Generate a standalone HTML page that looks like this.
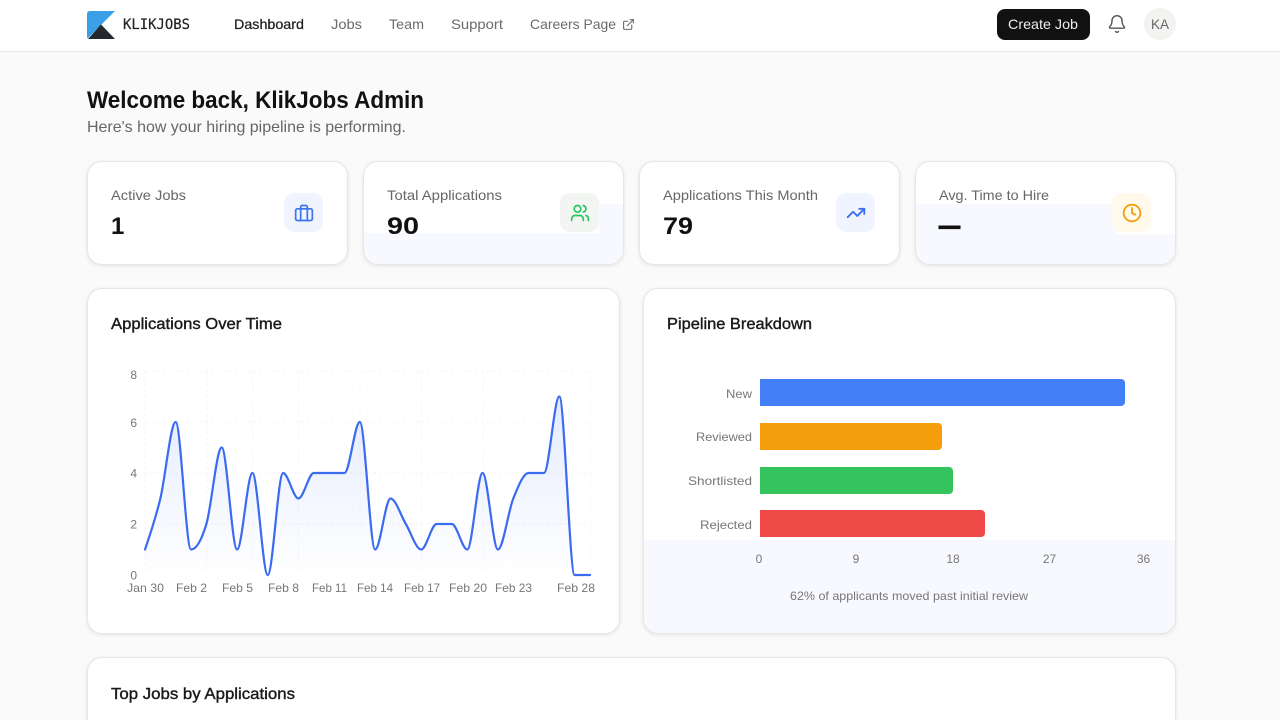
<!DOCTYPE html>
<html lang="en">
<head>
<meta charset="utf-8">
<title>KlikJobs Dashboard</title>
<style>
html,body{margin:0;padding:0;width:1280px;height:720px;overflow:hidden;background:#fafafa;font-family:"Liberation Sans",sans-serif}
#page{position:relative;width:1280px;height:720px;overflow:hidden;background:#fafafa}
.abs,.card,.ico{position:absolute;box-sizing:border-box}
.nav{position:absolute;left:0;top:0;width:1280px;height:52px;background:#fff;border-bottom:1px solid #e8e8e8;box-sizing:border-box}
.card{background:#fff;border:1px solid #e6e6e6;border-radius:15px;box-shadow:0 1px 4px rgba(0,0,0,.09);overflow:hidden}
.lav{position:absolute;background:#f8f9fe}
.ico{width:39px;height:39px;top:193px;border-radius:10px;display:flex;align-items:center;justify-content:center}
.bar{position:absolute;left:760px;height:27px;border-radius:0 4px 4px 0}
svg{display:block}
#t{position:absolute;left:0;top:0}
#t text{font-family:"Liberation Sans",sans-serif}
.m{stroke-width:.25;paint-order:stroke}
.lab{font-size:14px;fill:#666}
.val{font-size:24px;font-weight:700;fill:#111}
.ttl{font-size:16px;fill:#1a1a1a;stroke:#1a1a1a;stroke-width:.4}
.ax{font-size:12px;fill:#777}
</style>
</head>
<body>
<div id="page">
<div class="nav"></div>

<svg class="abs" style="left:87px;top:11px" width="28" height="28" viewBox="0 0 28 28">
<path d="M3 0H28L.5 27.500Q0 27 0 25V3Q0 0 3 0Z" fill="#3b9fe8"/>
<path d="M14 13.500L28 28H1Z" fill="#23292e"/>
</svg>

<div class="abs" style="left:997px;top:9px;width:93px;height:31px;background:#111;border-radius:8px"></div>
<svg class="abs" style="left:1107px;top:14px" width="20" height="20" viewBox="0 0 24 24" fill="none" stroke="#555" stroke-width="1.750" stroke-linecap="round" stroke-linejoin="round"><path d="M10.268 21a2 2 0 0 0 3.464 0"/><path d="M3.262 15.326A1 1 0 0 0 4 17h16a1 1 0 0 0 .74-1.673C19.41 13.956 18 12.499 18 8A6 6 0 0 0 6 8c0 4.499-1.411 5.956-2.738 7.326"/></svg>
<div class="abs" style="left:1144px;top:8px;width:32px;height:32px;border-radius:50%;background:#f3f3f1"></div>
<svg class="abs" style="left:622px;top:18px" width="13" height="13" viewBox="0 0 24 24" fill="none" stroke="#666" stroke-width="2" stroke-linecap="round" stroke-linejoin="round"><path d="M15 3h6v6"/><path d="M10 14 21 3"/><path d="M18 13v6a2 2 0 0 1-2 2H5a2 2 0 0 1-2-2V8a2 2 0 0 1 2-2h6"/></svg>

<div class="card" style="left:87px;top:161px;width:261px;height:104px"></div>
<div class="card" style="left:363px;top:161px;width:261px;height:104px">
<div class="lav" style="left:0;top:71px;width:260px;height:40px"></div>
<div class="lav" style="left:235px;top:42px;width:25px;height:30px"></div>
</div>
<div class="card" style="left:639px;top:161px;width:261px;height:104px"></div>
<div class="card" style="left:915px;top:161px;width:261px;height:104px">
<div class="lav" style="left:0;top:42px;width:200px;height:30px"></div>
<div class="lav" style="left:0;top:72px;width:260px;height:40px"></div>
</div>

<div class="ico" style="left:284px;background:#eff4ff"><svg width="20" height="20" viewBox="0 0 24 24" fill="none" stroke="#3b74f0" stroke-width="2" stroke-linecap="round" stroke-linejoin="round"><rect x="2" y="7" width="20" height="14" rx="2"/><path d="M16 21V5a2 2 0 0 0-2-2h-4a2 2 0 0 0-2 2v16"/></svg></div>
<div class="ico" style="left:560px;background:#f3f5f3"><svg width="20" height="20" viewBox="0 0 24 24" fill="none" stroke="#22c55e" stroke-width="2" stroke-linecap="round" stroke-linejoin="round"><path d="M16 21v-2a4 4 0 0 0-4-4H6a4 4 0 0 0-4 4v2"/><circle cx="9" cy="7" r="4"/><path d="M22 21v-2a4 4 0 0 0-3-3.870"/><path d="M16 3.130a4 4 0 0 1 0 7.750"/></svg></div>
<div class="ico" style="left:836px;background:#eff4ff"><svg width="20" height="20" viewBox="0 0 24 24" fill="none" stroke="#3b6ff0" stroke-width="2.200" stroke-linecap="round" stroke-linejoin="round"><path d="M22 7 13.500 15.500 8.500 10.500 2 17"/><path d="M16 7h6v6"/></svg></div>
<div class="ico" style="left:1112px;background:#fffaeb"><svg width="20" height="20" viewBox="0 0 24 24" fill="none" stroke="#f59e0b" stroke-width="2.200" stroke-linecap="round" stroke-linejoin="round"><circle cx="12" cy="12" r="10"/><path d="M12 6v6l4 2"/></svg></div>

<div class="card" style="left:87px;top:288px;width:533px;height:346px"></div>
<div class="card" style="left:643px;top:288px;width:533px;height:346px">
<div class="lav" style="left:0;top:251px;width:532px;height:95px"></div>
</div>
<div class="abs" style="left:80px;top:650px;width:1104px;height:70px;overflow:hidden">
<div class="card" style="left:7px;top:7px;width:1089px;height:63px;border-bottom:0;border-radius:15px 15px 0 0"></div>
</div>

<svg class="abs" style="left:0;top:0" width="1280" height="720" viewBox="0 0 1280 720" fill="none">
<defs><linearGradient id="g" x1="0" y1="371" x2="0" y2="575" gradientUnits="userSpaceOnUse"><stop offset="0" stop-color="#3b6ff0" stop-opacity=".16"/><stop offset="1" stop-color="#3b6ff0" stop-opacity="0"/></linearGradient></defs>
<g stroke="#f5f5f5" stroke-width="1" stroke-dasharray="3 3">
<path d="M145 371H590.500M145 422H590.500M145 473H590.500M145 524H590.500"/>
<path d="M145 371V575M207 371V575M253 371V575M298.500 371V575M360 371V575M421.500 371V575M483 371V575M590.500 371V575"/>
</g>
<path fill="url(#g)" d="M145 549.500C150.120 534.600 155.230 519.750 160.350 498.500C165.460 477.250 170.580 422 175.690 422C180.800 422 185.920 549.500 191.030 549.500C196.150 549.500 201.260 541 206.380 524C211.490 507 216.610 447.500 221.720 447.500C226.840 447.500 231.950 549.500 237.070 549.500C242.180 549.500 247.300 473 252.410 473C257.530 473 262.640 575 267.760 575C272.870 575 277.990 473 283.100 473C288.220 473 293.330 498.500 298.450 498.500C303.560 498.500 308.680 473 313.790 473L344.480 473C349.600 473 354.710 422 359.830 422C364.940 422 370.060 549.500 375.170 549.500C380.290 549.500 385.400 498.500 390.520 498.500C395.630 498.500 400.750 515.500 405.860 524C410.980 532.500 416.090 549.500 421.210 549.500C426.320 549.500 431.440 524 436.550 524L451.900 524C457.010 524 462.130 549.500 467.240 549.500C472.360 549.500 477.470 473 482.590 473C487.700 473 492.820 549.500 497.930 549.500C503.050 549.500 508.160 511.250 513.280 498.500C518.390 485.750 523.510 473 528.620 473L543.970 473C549.080 473 554.200 396.500 559.310 396.500C564.430 396.500 569.540 575 574.660 575L590 575L145 575Z"/>
<path stroke="#3b6cf0" stroke-width="2.200" stroke-linecap="round" stroke-linejoin="round" d="M145 549.500C150.120 534.600 155.230 519.750 160.350 498.500C165.460 477.250 170.580 422 175.690 422C180.800 422 185.920 549.500 191.030 549.500C196.150 549.500 201.260 541 206.380 524C211.490 507 216.610 447.500 221.720 447.500C226.840 447.500 231.950 549.500 237.070 549.500C242.180 549.500 247.300 473 252.410 473C257.530 473 262.640 575 267.760 575C272.870 575 277.990 473 283.100 473C288.220 473 293.330 498.500 298.450 498.500C303.560 498.500 308.680 473 313.790 473L344.480 473C349.600 473 354.710 422 359.830 422C364.940 422 370.060 549.500 375.170 549.500C380.290 549.500 385.400 498.500 390.520 498.500C395.630 498.500 400.750 515.500 405.860 524C410.980 532.500 416.090 549.500 421.210 549.500C426.320 549.500 431.440 524 436.550 524L451.900 524C457.010 524 462.130 549.500 467.240 549.500C472.360 549.500 477.470 473 482.590 473C487.700 473 492.820 549.500 497.930 549.500C503.050 549.500 508.160 511.250 513.280 498.500C518.390 485.750 523.510 473 528.620 473L543.970 473C549.080 473 554.200 396.500 559.310 396.500C564.430 396.500 569.540 575 574.660 575L590 575"/>
</svg>

<div class="bar" style="top:379px;width:365px;background:#4380f8"></div>
<div class="bar" style="top:423px;width:182px;background:#f59e0b"></div>
<div class="bar" style="top:467px;width:193px;background:#34c35c"></div>
<div class="bar" style="top:510px;width:225px;background:#ef4a48"></div>

<svg id="t" width="1280" height="720" viewBox="0 0 1280 720">
<text x="123" y="29" textLength="67" lengthAdjust="spacingAndGlyphs" style="font-family:'DejaVu Sans Mono',monospace;font-size:14px" fill="#222" stroke="#222" stroke-width=".2">KLIKJOBS</text>
<text x="234" y="29" textLength="70" lengthAdjust="spacingAndGlyphs" font-size="14" fill="#1f1f1f" stroke="#1f1f1f" class="m">Dashboard</text>
<text x="331" y="29" textLength="31" lengthAdjust="spacingAndGlyphs" font-size="14" fill="#6b6b6b">Jobs</text>
<text x="389" y="29" textLength="35" lengthAdjust="spacingAndGlyphs" font-size="14" fill="#6b6b6b">Team</text>
<text x="451" y="29" textLength="52" lengthAdjust="spacingAndGlyphs" font-size="14" fill="#6b6b6b">Support</text>
<text x="530" y="29" textLength="86" lengthAdjust="spacingAndGlyphs" font-size="14" fill="#6b6b6b">Careers Page</text>
<text x="1008" y="29" textLength="70" lengthAdjust="spacingAndGlyphs" font-size="14" fill="#eee">Create Job</text>
<text x="1151" y="29" textLength="18" lengthAdjust="spacingAndGlyphs" font-size="14" fill="#666">KA</text>

<text x="87" y="108" textLength="337" lengthAdjust="spacingAndGlyphs" font-size="24" font-weight="700" fill="#111">Welcome back, KlikJobs Admin</text>
<text x="87" y="132" textLength="319" lengthAdjust="spacingAndGlyphs" font-size="16" fill="#666">Here's how your hiring pipeline is performing.</text>

<text x="111" y="200" textLength="75" lengthAdjust="spacingAndGlyphs" class="lab">Active Jobs</text>
<text x="387" y="200" textLength="115" lengthAdjust="spacingAndGlyphs" class="lab">Total Applications</text>
<text x="663" y="200" textLength="155" lengthAdjust="spacingAndGlyphs" class="lab">Applications This Month</text>
<text x="939" y="200" textLength="110" lengthAdjust="spacingAndGlyphs" class="lab">Avg. Time to Hire</text>
<text x="111" y="234" class="val">1</text>
<text x="387" y="234" textLength="32" lengthAdjust="spacingAndGlyphs" class="val">90</text>
<text x="663" y="234" textLength="30" lengthAdjust="spacingAndGlyphs" class="val">79</text>
<text x="939" y="234" textLength="21" lengthAdjust="spacingAndGlyphs" class="val" stroke="#111" stroke-width="1.200">—</text>

<text x="111" y="329" textLength="171" lengthAdjust="spacingAndGlyphs" class="ttl">Applications Over Time</text>
<text x="667" y="329" textLength="145" lengthAdjust="spacingAndGlyphs" class="ttl">Pipeline Breakdown</text>
<text x="111" y="699" textLength="184" lengthAdjust="spacingAndGlyphs" class="ttl">Top Jobs by Applications</text>

<g class="ax" text-anchor="end">
<text x="137" y="379">8</text><text x="137" y="427">6</text><text x="137" y="477.500">4</text><text x="137" y="528.500">2</text><text x="137" y="579.500">0</text>
</g>
<g class="ax">
<text x="127" y="592" textLength="37" lengthAdjust="spacingAndGlyphs">Jan 30</text>
<text x="176" y="592" textLength="31" lengthAdjust="spacingAndGlyphs">Feb 2</text>
<text x="222" y="592" textLength="31" lengthAdjust="spacingAndGlyphs">Feb 5</text>
<text x="268" y="592" textLength="31" lengthAdjust="spacingAndGlyphs">Feb 8</text>
<text x="312" y="592" textLength="35" lengthAdjust="spacingAndGlyphs">Feb 11</text>
<text x="357" y="592" textLength="36" lengthAdjust="spacingAndGlyphs">Feb 14</text>
<text x="404" y="592" textLength="36" lengthAdjust="spacingAndGlyphs">Feb 17</text>
<text x="449" y="592" textLength="38" lengthAdjust="spacingAndGlyphs">Feb 20</text>
<text x="495" y="592" textLength="37" lengthAdjust="spacingAndGlyphs">Feb 23</text>
<text x="557" y="592" textLength="38" lengthAdjust="spacingAndGlyphs">Feb 28</text>
</g>
<g class="ax">
<text x="726" y="398" textLength="26" lengthAdjust="spacingAndGlyphs">New</text>
<text x="696" y="441" textLength="56" lengthAdjust="spacingAndGlyphs">Reviewed</text>
<text x="688" y="485" textLength="64" lengthAdjust="spacingAndGlyphs">Shortlisted</text>
<text x="700" y="529" textLength="52" lengthAdjust="spacingAndGlyphs">Rejected</text>
</g>
<g class="ax" text-anchor="middle">
<text x="759" y="563">0</text><text x="856" y="563">9</text><text x="953" y="563">18</text><text x="1049.500" y="563">27</text><text x="1143.500" y="563">36</text>
</g>
<text x="790" y="600" textLength="238" lengthAdjust="spacingAndGlyphs" class="ax">62% of applicants moved past initial review</text>
</svg>
</div>
</body>
</html>
